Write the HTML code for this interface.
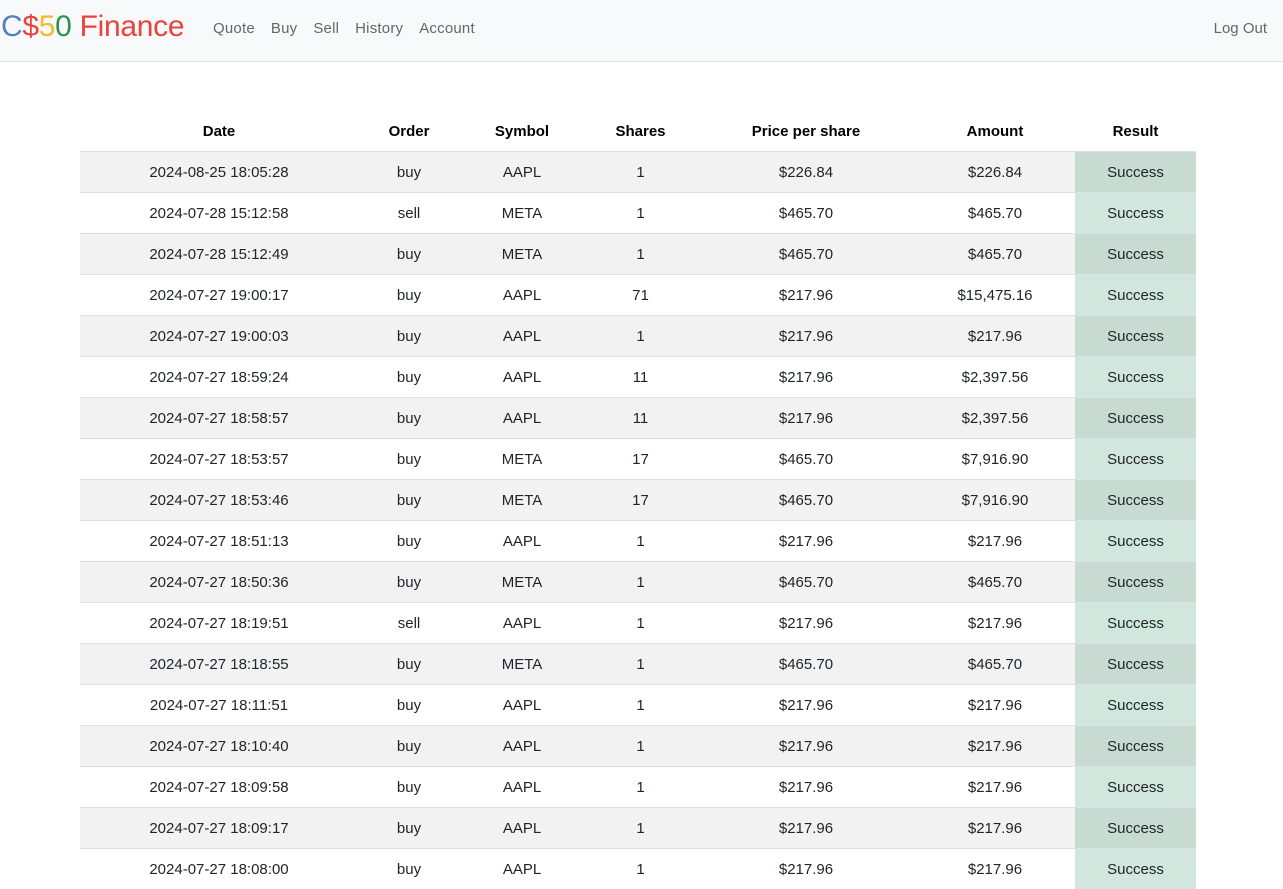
<!DOCTYPE html>
<html><head><meta charset="utf-8"><style>
body{margin:0;font-family:"Liberation Sans",sans-serif;font-size:15px;color:#212529;background:#fff;width:1283px;height:852px;overflow:hidden}
.nav{height:62px;background:#f8f9fa;border-bottom:1px solid #dee2e6;box-sizing:border-box;position:relative}
.brand{position:absolute;left:1px;top:9px;font-size:30px;line-height:36px;letter-spacing:-0.3px}
.links{position:absolute;left:213px;top:20px;font-size:15px;color:#666}
.links span{margin-right:16px;letter-spacing:0.2px}
.out{position:absolute;right:16px;top:20px;font-size:15px;color:#666}
table{position:absolute;left:80px;top:111px;border-collapse:collapse;width:1116px}
th{height:40px;font-weight:bold;font-size:15px;color:#000;text-align:center;padding:0}
td{height:40px;border-top:1px solid #dee2e6;text-align:center;padding:0;font-size:15px}
tbody tr:nth-child(odd) td{background:#f2f2f2}
td.r{background:#d1e7dd!important}
tbody tr:nth-child(odd) td.r{background:#c7dbd2!important}
</style></head><body>
<div class="nav"><div class="brand"><span style="color:#537fbe">C</span><span style="color:#ea433b">$</span><span style="color:#f5b82e">5</span><span style="color:#2e944b">0</span> <span style="color:#ea433b">Finance</span></div>
<div class="links"><span>Quote</span><span>Buy</span><span>Sell</span><span>History</span><span>Account</span></div>
<div class="out">Log Out</div></div>
<table>
<colgroup><col style="width:278px"><col style="width:102px"><col style="width:124px"><col style="width:113px"><col style="width:218px"><col style="width:160px"><col style="width:121px"></colgroup>
<thead><tr><th>Date</th><th>Order</th><th>Symbol</th><th>Shares</th><th>Price per share</th><th>Amount</th><th>Result</th></tr></thead>
<tbody>
<tr><td>2024-08-25 18:05:28</td><td>buy</td><td>AAPL</td><td>1</td><td>$226.84</td><td>$226.84</td><td class="r">Success</td></tr>
<tr><td>2024-07-28 15:12:58</td><td>sell</td><td>META</td><td>1</td><td>$465.70</td><td>$465.70</td><td class="r">Success</td></tr>
<tr><td>2024-07-28 15:12:49</td><td>buy</td><td>META</td><td>1</td><td>$465.70</td><td>$465.70</td><td class="r">Success</td></tr>
<tr><td>2024-07-27 19:00:17</td><td>buy</td><td>AAPL</td><td>71</td><td>$217.96</td><td>$15,475.16</td><td class="r">Success</td></tr>
<tr><td>2024-07-27 19:00:03</td><td>buy</td><td>AAPL</td><td>1</td><td>$217.96</td><td>$217.96</td><td class="r">Success</td></tr>
<tr><td>2024-07-27 18:59:24</td><td>buy</td><td>AAPL</td><td>11</td><td>$217.96</td><td>$2,397.56</td><td class="r">Success</td></tr>
<tr><td>2024-07-27 18:58:57</td><td>buy</td><td>AAPL</td><td>11</td><td>$217.96</td><td>$2,397.56</td><td class="r">Success</td></tr>
<tr><td>2024-07-27 18:53:57</td><td>buy</td><td>META</td><td>17</td><td>$465.70</td><td>$7,916.90</td><td class="r">Success</td></tr>
<tr><td>2024-07-27 18:53:46</td><td>buy</td><td>META</td><td>17</td><td>$465.70</td><td>$7,916.90</td><td class="r">Success</td></tr>
<tr><td>2024-07-27 18:51:13</td><td>buy</td><td>AAPL</td><td>1</td><td>$217.96</td><td>$217.96</td><td class="r">Success</td></tr>
<tr><td>2024-07-27 18:50:36</td><td>buy</td><td>META</td><td>1</td><td>$465.70</td><td>$465.70</td><td class="r">Success</td></tr>
<tr><td>2024-07-27 18:19:51</td><td>sell</td><td>AAPL</td><td>1</td><td>$217.96</td><td>$217.96</td><td class="r">Success</td></tr>
<tr><td>2024-07-27 18:18:55</td><td>buy</td><td>META</td><td>1</td><td>$465.70</td><td>$465.70</td><td class="r">Success</td></tr>
<tr><td>2024-07-27 18:11:51</td><td>buy</td><td>AAPL</td><td>1</td><td>$217.96</td><td>$217.96</td><td class="r">Success</td></tr>
<tr><td>2024-07-27 18:10:40</td><td>buy</td><td>AAPL</td><td>1</td><td>$217.96</td><td>$217.96</td><td class="r">Success</td></tr>
<tr><td>2024-07-27 18:09:58</td><td>buy</td><td>AAPL</td><td>1</td><td>$217.96</td><td>$217.96</td><td class="r">Success</td></tr>
<tr><td>2024-07-27 18:09:17</td><td>buy</td><td>AAPL</td><td>1</td><td>$217.96</td><td>$217.96</td><td class="r">Success</td></tr>
<tr><td>2024-07-27 18:08:00</td><td>buy</td><td>AAPL</td><td>1</td><td>$217.96</td><td>$217.96</td><td class="r">Success</td></tr>
</tbody></table>
</body></html>
